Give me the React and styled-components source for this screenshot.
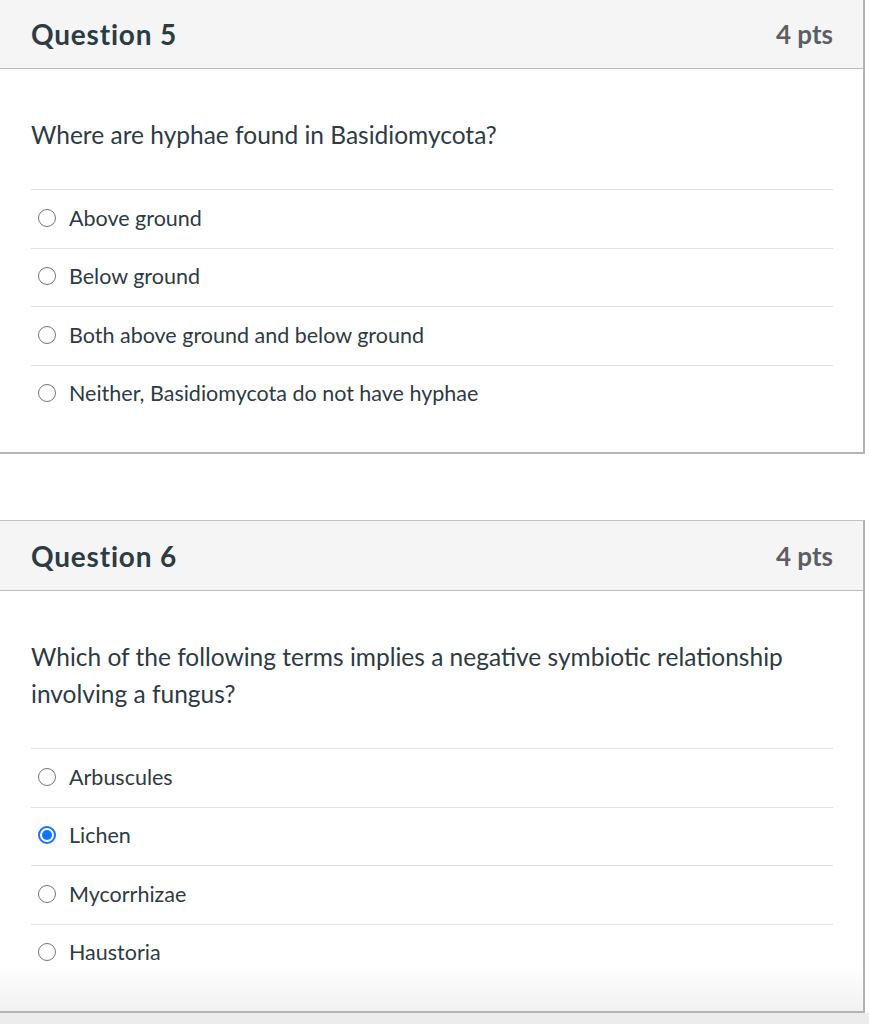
import React from 'react'
import styled, { createGlobalStyle } from 'styled-components'

const GlobalStyle = createGlobalStyle`
  html, body {
    margin: 0;
    padding: 0;
    background: #ececec;
  }
  body {
    font-family: Lato, "Open Sans", "Liberation Sans", sans-serif;
    color: #2d3b45;
    overflow: hidden;
  }
`

export const Page = styled.div`
  background: #fff;
  width: 869px;
  margin-top: -2px;
`

export const Card = styled.section`
  width: 867px;
  margin-left: -2px;
  border: 1px solid #c2c2c2;
  border-right: 2px solid #b4b4b4;
  border-bottom: 2px solid #b4b4b4;
  box-sizing: border-box;
  & + & {
    margin-top: 66px;
  }
`

export const Header = styled.header`
  height: 70px;
  box-sizing: border-box;
  display: flex;
  align-items: center;
  justify-content: space-between;
  padding: 0 30px 0 32px;
  background: #f5f5f5;
  border-bottom: 1px solid #b9bec2;
`

export const Title = styled.h2`
  margin: 0;
  font-size: 28px;
  font-weight: 700;
  letter-spacing: 0.8px;
  color: #2d3b45;
`

export const Points = styled.span`
  font-size: 26px;
  font-weight: 700;
  color: #5c5f62;
`

export const Body = styled.div`
  padding: 47px 30px 29px 32px;
  background: ${p => (p.fade ? 'linear-gradient(to bottom, #fff calc(100% - 45px), #f1f1f1)' : '#fff')};
`

export const Prompt = styled.p`
  margin: 0 0 36px;
  font-size: 24.5px;
  line-height: 37px;
  color: #2d3b45;
`

export const Answers = styled.div`
  display: flex;
  flex-direction: column;
`

export const Row = styled.label`
  display: flex;
  align-items: center;
  gap: 13px;
  height: 58.5px;
  padding-left: 7px;
  padding-bottom: 2px;
  border-top: 1px solid #e2e2e2;
  box-sizing: border-box;
  font-size: 21.5px;
  color: #2d3b45;
`

export const Radio = styled.span`
  width: 18px;
  height: 18px;
  box-sizing: border-box;
  border-radius: 50%;
  flex: none;
  border: ${p => (p.checked ? '2px solid #0f74ff' : '1.5px solid #767676')};
  background: #fff;
  display: flex;
  align-items: center;
  justify-content: center;
  &::after {
    content: '';
    display: ${p => (p.checked ? 'block' : 'none')};
    width: 10px;
    height: 10px;
    border-radius: 50%;
    background: #0f74ff;
  }
`

const questions = [
  {
    title: 'Question 5',
    points: '4 pts',
    prompt: 'Where are hyphae found in Basidiomycota?',
    answers: [
      'Above ground',
      'Below ground',
      'Both above ground and below ground',
      'Neither, Basidiomycota do not have hyphae',
    ],
    selected: -1,
  },
  {
    title: 'Question 6',
    points: '4 pts',
    prompt: 'Which of the following terms implies a negative symbiotic relationship involving a fungus?',
    answers: ['Arbuscules', 'Lichen', 'Mycorrhizae', 'Haustoria'],
    selected: 1,
  },
]

const Question = ({ q, fade }) => (
  <Card>
    <Header>
      <Title>{q.title}</Title>
      <Points>{q.points}</Points>
    </Header>
    <Body fade={fade}>
      <Prompt>{q.prompt}</Prompt>
      <Answers>
        {q.answers.map((a, i) => (
          <Row key={a}>
            <Radio checked={i === q.selected} />
            {a}
          </Row>
        ))}
      </Answers>
    </Body>
  </Card>
)

export default function App() {
  return (
    <>
      <GlobalStyle />
      <Page>
        {questions.map((q, i) => (
          <Question key={q.title} q={q} fade={i === questions.length - 1} />
        ))}
      </Page>
    </>
  )
}
